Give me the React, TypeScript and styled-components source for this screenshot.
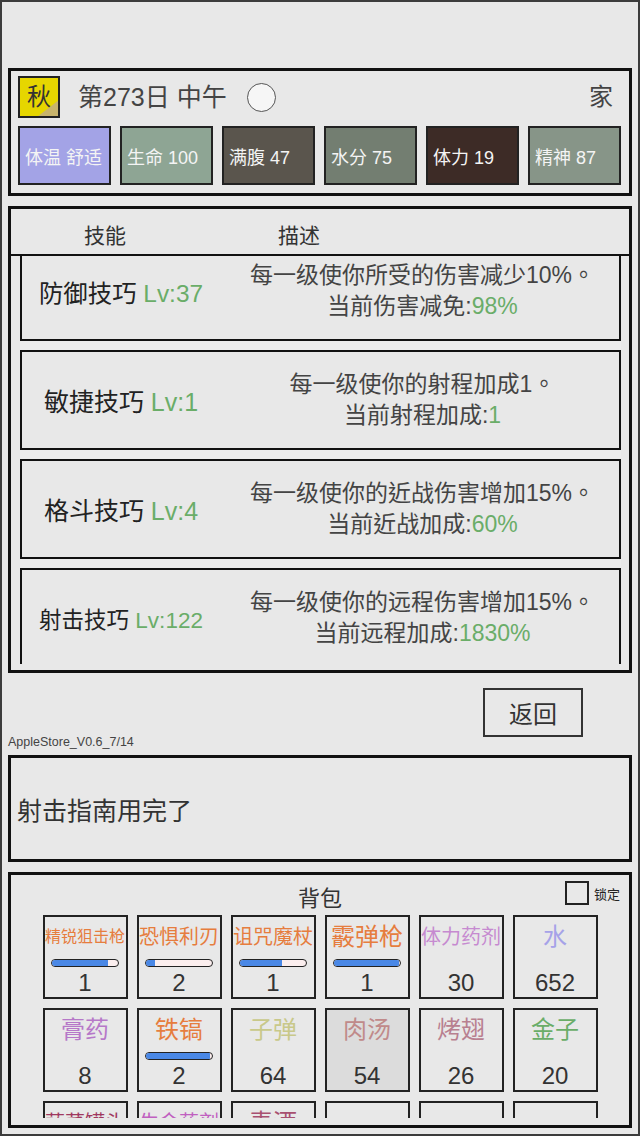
import React, { useLayoutEffect, useRef } from "react";
import styled, { createGlobalStyle } from "styled-components";

const GlobalStyle = createGlobalStyle`
  html, body {
    margin: 0;
    padding: 0;
    background: #e8e8e8;
  }
  body {
    font-family: "Liberation Sans", "Noto Sans CJK SC", sans-serif;
  }
  * {
    box-sizing: border-box;
  }
`;

const GREEN = "#6aad68";
const ORANGE = "#e67d3e";

const Screen = styled.div`
  width: 640px;
  height: 1136px;
  border: 2px solid #3c3c3c;
  padding: 66px 6px 6px;
  display: flex;
  flex-direction: column;
  background: #e8e8e8;
  overflow: hidden;
`;

const Panel = styled.section`
  border: 3px solid #111;
  flex-shrink: 0;
`;

/* ---------- status header ---------- */

const HeaderPanel = styled(Panel)`
  height: 128px;
  padding: 5px 8px 8px 7px;
  display: flex;
  flex-direction: column;
  gap: 8px;
`;

const TopRow = styled.div`
  height: 42px;
  display: flex;
  align-items: center;
`;

const SeasonBadge = styled.div`
  position: relative;
  width: 42px;
  height: 42px;
  border: 2px solid #222;
  background: #e6d600;
  display: flex;
  align-items: center;
  justify-content: center;
  font-size: 24px;
  line-height: 1;
  color: #333;

  &::after {
    content: "";
    position: absolute;
    inset: 0;
    background: #c8b46c;
    clip-path: polygon(48% 100%, 100% 60%, 100% 100%);
  }

  span {
    position: relative;
    z-index: 1;
  }
`;

const DayLabel = styled.div`
  margin-left: 18px;
  font-size: 25px;
  line-height: 1;
  color: #444;
`;

const Sun = styled.div`
  margin-left: 20px;
  width: 29px;
  height: 29px;
  border-radius: 50%;
  border: 1px solid #555;
  background: #f6f6f6;
`;

const Place = styled.div`
  margin-left: auto;
  margin-right: 8px;
  font-size: 24px;
  line-height: 1;
  color: #444;
`;

const StatRow = styled.div`
  display: grid;
  grid-template-columns: repeat(6, 93px);
  gap: 9px;
`;

const StatBox = styled.div<{ $bg: string }>`
  height: 59px;
  border: 2px solid #222;
  background: ${(p) => p.$bg};
  color: #f4f4f4;
  font-size: 18px;
  display: flex;
  align-items: center;
  padding-left: 5px;
  white-space: nowrap;
`;

/* ---------- skills table ---------- */

const SkillsPanel = styled(Panel)`
  margin-top: 10px;
  height: 467px;
  display: flex;
  flex-direction: column;
`;

const SkillsHeader = styled.div`
  height: 47px;
  border-bottom: 2px solid #111;
  display: grid;
  grid-template-columns: 188px 200px;
  align-items: center;
  padding-top: 4px;
  font-size: 21px;
  color: #333;
  text-align: center;
`;

const SkillViewport = styled.div`
  flex: 1;
  margin: 0 8px 6px 9px;
  overflow-y: auto;
  scrollbar-width: none;
  background: #ececec;

  &::-webkit-scrollbar {
    display: none;
  }
`;

const SkillList = styled.div`
  display: flex;
  flex-direction: column;
  gap: 9px;
`;

const SkillCard = styled.div`
  flex-shrink: 0;
  height: 100px;
  border: 2px solid #111;
  background: #e8e8e8;
  display: grid;
  grid-template-columns: 198px 1fr;
  align-items: center;
`;

const SkillName = styled.div<{ $size: number }>`
  text-align: center;
  font-size: ${(p) => p.$size}px;
  color: #222;
  white-space: nowrap;
`;

const Accent = styled.span`
  color: ${GREEN};
`;

const SkillDesc = styled.div`
  padding-left: 6px;
  text-align: center;
  font-family: "Liberation Sans", "Noto Sans CJK TC", sans-serif;
  font-size: 23px;
  line-height: 31px;
  color: #444;
  white-space: nowrap;
`;

/* ---------- actions & log ---------- */

const ActionArea = styled.div`
  display: flex;
  flex-direction: column;
  flex-shrink: 0;
`;

const ReturnButton = styled.button`
  align-self: flex-end;
  margin: 15px 49px 0 0;
  width: 100px;
  height: 49px;
  border: 2px solid #333;
  background: transparent;
  font-family: inherit;
  font-size: 24px;
  color: #333;
  padding: 0;
`;

const Version = styled.div`
  margin: -2px 0 6px;
  height: 14px;
  font-size: 12.5px;
  line-height: 14px;
  color: #444;
`;

const MessagePanel = styled(Panel)`
  height: 107px;
  display: flex;
  align-items: center;
  padding-left: 6px;
  font-size: 25px;
  color: #333;
`;

/* ---------- inventory ---------- */

const InventoryPanel = styled(Panel)`
  margin-top: 10px;
  height: 256px;
  display: flex;
  flex-direction: column;
`;

const InvTitleBar = styled.div`
  height: 40px;
  padding: 0 9px;
  display: grid;
  grid-template-columns: 1fr auto 1fr;
  align-items: center;
`;

const InvTitle = styled.div`
  font-size: 22px;
  color: #333;
  padding-top: 2px;
`;

const LockToggle = styled.label`
  justify-self: end;
  display: flex;
  align-items: center;
  gap: 5px;
  font-size: 13px;
  color: #222;
  margin-top: -4px;
`;

const LockBox = styled.span`
  width: 24px;
  height: 24px;
  border: 2px solid #222;
`;

const ItemViewport = styled.div`
  flex: 1;
  margin-bottom: 7px;
  overflow-y: auto;
  scrollbar-width: none;

  &::-webkit-scrollbar {
    display: none;
  }
`;

const ItemGrid = styled.div`
  display: grid;
  grid-template-columns: repeat(6, 85px);
  grid-auto-rows: 84px;
  gap: 9px;
  justify-content: center;
`;

const ItemCell = styled.div<{ $selected?: boolean }>`
  border: 2px solid #222;
  background: ${(p) => (p.$selected ? "#dcdcdc" : "#e8e8e8")};
  display: flex;
  flex-direction: column;
  align-items: center;
`;

const ItemName = styled.div<{ $color: string; $size: number }>`
  height: 40px;
  line-height: 40px;
  font-size: ${(p) => p.$size}px;
  color: ${(p) => p.$color};
  white-space: nowrap;
`;

const BarSlot = styled.div`
  margin-top: 2px;
  width: 68px;
  height: 8px;
`;

const Bar = styled.div`
  height: 100%;
  border: 1px solid #222;
  border-radius: 4px;
  background: #fbeeee;
  overflow: hidden;
`;

const BarFill = styled.div`
  height: 100%;
  background: #4a88e6;
`;

const ItemCount = styled.div`
  margin-top: 2px;
  line-height: 28px;
  font-size: 24px;
  color: #333;
`;

/* ---------- data ---------- */

const stats = [
  { label: "体温 舒适", bg: "#a3a3e6" },
  { label: "生命 100", bg: "#8ea594" },
  { label: "满腹 47", bg: "#5a554d" },
  { label: "水分 75", bg: "#737e71" },
  { label: "体力 19", bg: "#3d2b26" },
  { label: "精神 87", bg: "#879588" },
];

const skills = [
  { name: "防御技巧", lv: 37, line: "每一级使你所受的伤害减少10%。", cur: "当前伤害减免:", val: "98%" },
  { name: "敏捷技巧", lv: 1, line: "每一级使你的射程加成1。", cur: "当前射程加成:", val: "1" },
  { name: "格斗技巧", lv: 4, line: "每一级使你的近战伤害增加15%。", cur: "当前近战加成:", val: "60%" },
  { name: "射击技巧", lv: 122, line: "每一级使你的远程伤害增加15%。", cur: "当前远程加成:", val: "1830%" },
];

type Item = {
  name: string;
  color: string;
  count?: number;
  durability?: number;
  selected?: boolean;
};

const items: Item[] = [
  { name: "精锐狙击枪", color: ORANGE, count: 1, durability: 0.85 },
  { name: "恐惧利刃", color: ORANGE, count: 2, durability: 0.14 },
  { name: "诅咒魔杖", color: ORANGE, count: 1, durability: 0.63 },
  { name: "霰弹枪", color: ORANGE, count: 1, durability: 0.98 },
  { name: "体力药剂", color: "#c68ad0", count: 30 },
  { name: "水", color: "#a6a2e8", count: 652 },
  { name: "膏药", color: "#b678c8", count: 8 },
  { name: "铁镐", color: ORANGE, count: 2, durability: 0.97 },
  { name: "子弹", color: "#c8c88a", count: 64 },
  { name: "肉汤", color: "#c08a8a", count: 54, selected: true },
  { name: "烤翅", color: "#b88090", count: 26 },
  { name: "金子", color: GREEN, count: 20 },
  { name: "蔬菜罐头", color: "#a03860", count: 3 },
  { name: "生命药剂", color: "#c060c0", count: 5 },
  { name: "麦酒", color: "#a85070", count: 2 },
  { name: "", color: "#333" },
  { name: "", color: "#333" },
  { name: "", color: "#333" },
];

// Item labels shrink so that long names still fit their slot.
const fitSize = (name: string) => Math.min(24, Math.floor(80 / Math.max(name.length, 1)));

// Skill titles shrink with the length of the level number.
const skillTitleSize = (name: string, lv: number) => {
  const em = name.length + 0.278 + 1.334 + String(lv).length * 0.556;
  return Math.min(25, Math.round((164 / em) * 10) / 10);
};

export default function App() {
  const skillRef = useRef<HTMLDivElement>(null);

  useLayoutEffect(() => {
    if (skillRef.current) skillRef.current.scrollTop = 15;
  }, []);

  return (
    <>
      <GlobalStyle />
      <Screen>
        <HeaderPanel>
          <TopRow>
            <SeasonBadge>
              <span>秋</span>
            </SeasonBadge>
            <DayLabel>第273日 中午</DayLabel>
            <Sun />
            <Place>家</Place>
          </TopRow>
          <StatRow>
            {stats.map((s) => (
              <StatBox key={s.label} $bg={s.bg}>
                {s.label}
              </StatBox>
            ))}
          </StatRow>
        </HeaderPanel>

        <SkillsPanel>
          <SkillsHeader>
            <div>技能</div>
            <div>描述</div>
          </SkillsHeader>
          <SkillViewport ref={skillRef}>
            <SkillList>
              {skills.map((s) => (
                <SkillCard key={s.name}>
                  <SkillName $size={skillTitleSize(s.name, s.lv)}>
                    {s.name} <Accent>Lv:{s.lv}</Accent>
                  </SkillName>
                  <SkillDesc>
                    {s.line}
                    <br />
                    {s.cur}
                    <Accent>{s.val}</Accent>
                  </SkillDesc>
                </SkillCard>
              ))}
            </SkillList>
          </SkillViewport>
        </SkillsPanel>

        <ActionArea>
          <ReturnButton>返回</ReturnButton>
          <Version>AppleStore_V0.6_7/14</Version>
        </ActionArea>

        <MessagePanel>射击指南用完了</MessagePanel>

        <InventoryPanel>
          <InvTitleBar>
            <span />
            <InvTitle>背包</InvTitle>
            <LockToggle>
              <LockBox />
              锁定
            </LockToggle>
          </InvTitleBar>
          <ItemViewport>
            <ItemGrid>
              {items.map((it, i) => (
                <ItemCell key={i} $selected={it.selected}>
                  <ItemName $color={it.color} $size={fitSize(it.name)}>
                    {it.name}
                  </ItemName>
                  <BarSlot>
                    {it.durability !== undefined && (
                      <Bar>
                        <BarFill style={{ width: `${it.durability * 100}%` }} />
                      </Bar>
                    )}
                  </BarSlot>
                  <ItemCount>{it.count ?? ""}</ItemCount>
                </ItemCell>
              ))}
            </ItemGrid>
          </ItemViewport>
        </InventoryPanel>
      </Screen>
    </>
  );
}
